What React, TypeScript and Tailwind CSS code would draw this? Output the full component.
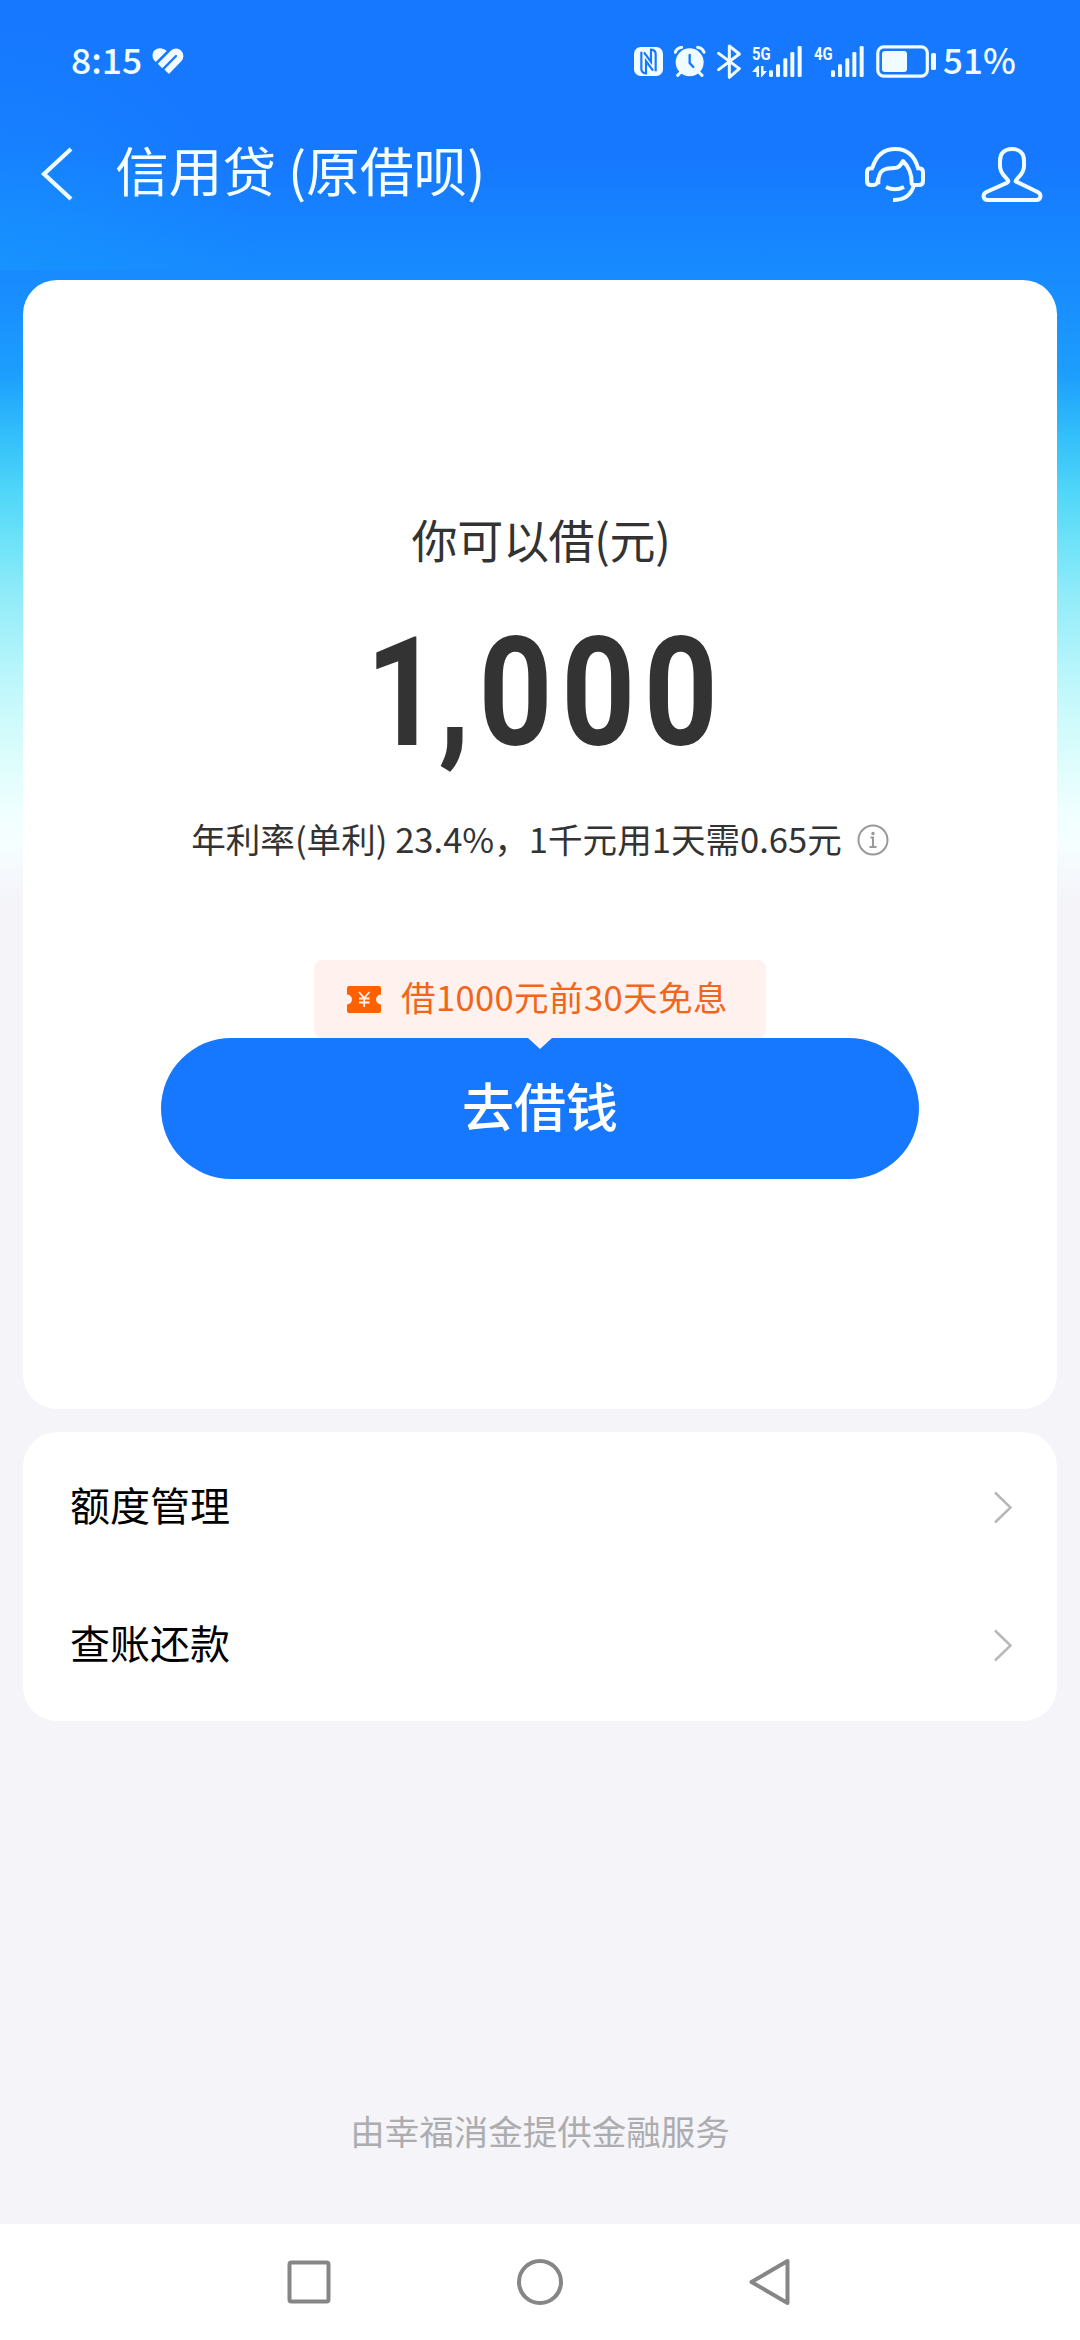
import type { ReactNode } from "react";

const menuItems = ["额度管理", "查账还款"];

function SignalBars() {
  return (
    <svg className="h-[31px] w-[33px]" viewBox="449 46 99 93" fill="#f0fcff">
      <rect x="449" y="119" width="12" height="20" rx="4" />
      <rect x="470" y="101" width="12" height="38" rx="4" />
      <rect x="492" y="83" width="12" height="56" rx="4" />
      <rect x="513" y="64" width="12" height="75" rx="4" />
      <rect x="535" y="46" width="12" height="93" rx="4" />
    </svg>
  );
}

function NetworkLabel({ children, active }: { children: ReactNode; active?: boolean }) {
  return (
    <div className="flex h-[31px] w-[17px] flex-col justify-between">
      <span className="w-[21px] origin-left scale-x-[0.78] font-['Roboto'] text-[19px] leading-[15px] font-bold">
        {children}
      </span>
      {active && (
        <svg className="h-[11px] w-[15px]" viewBox="0 0 15 11" fill="#f0fcff">
          <path d="M0 6 5.500 0H7v11H4.500V6zM9 0h2.500v5H15L9.800 11H9z" />
        </svg>
      )}
    </div>
  );
}

function StatusBar() {
  return (
    <div className="flex h-[122px] items-center pl-[71px] text-[#f0fcff]">
      <span className="w-[81px] pb-[4px] font-['Noto_Sans_CJK_SC'] text-[35.500px] leading-[44px] font-medium">8:15</span>
      <svg className="h-[27px] w-[32px]" viewBox="306 52 96 81" fill="none">
        <path d="M317 94c-16-14-11-40 12-41 9 0 15 3 21 8z" fill="#f0fcff" />
        <path d="m330 106 39-39a12.500 12.500 0 0 1 18 18l-37 38" stroke="#f0fcff" strokeWidth="19" />
      </svg>

      <div className="ml-[450px] flex items-center">
        {/* NFC */}
        <svg className="h-[29px] w-[29px]" viewBox="39 50 87 87">
          <rect x="39" y="50" width="87" height="87" rx="20" fill="#f0fcff" />
          <path
            d="M61 64v52q0 12 14 13V92l21 29M104 123V71q0-12-14-13v37L69 66"
            fill="none"
            stroke="#1677ff"
            strokeWidth="6.500"
          />
        </svg>
        {/* Alarm */}
        <svg className="ml-[11px] h-[31px] w-[32px]" viewBox="160 46 96 93" fill="none" strokeLinecap="round">
          <circle cx="207" cy="95" r="42" fill="#f0fcff" />
          <path d="M164 65q4-13 19-15M250 65q-4-13-19-15M181 124l-10 10M234 124l10 10" stroke="#f0fcff" strokeWidth="9" />
          <path d="M207 73v24l11 12" stroke="#1677ff" strokeWidth="7" />
        </svg>
        {/* Bluetooth */}
        <svg className="ml-[11px] h-[35px] w-[25px]" viewBox="289 42 75 105" fill="none">
          <path d="m294 70 62 46-30 26V48l30 24-62 47" stroke="#f0fcff" strokeWidth="9" strokeLinejoin="round" strokeLinecap="round" />
        </svg>
        <div className="ml-[10px] flex">
          <NetworkLabel active>5G</NetworkLabel>
          <SignalBars />
        </div>
        <div className="ml-[12px] flex">
          <NetworkLabel>4G</NetworkLabel>
          <SignalBars />
        </div>
        <svg className="ml-[12px] h-[33px] w-[61px]" viewBox="0 0 61 33" fill="none">
          <rect x="1.800" y="1.800" width="49.500" height="29.400" rx="6" stroke="#f0fcff" strokeWidth="3.200" />
          <rect x="6" y="6" width="25" height="21" rx="3" fill="#f0fcff" />
          <rect x="55" y="8" width="5" height="17" rx="1.500" fill="#f0fcff" />
        </svg>
        <span className="ml-[6px] pb-[4px] font-['Noto_Sans_CJK_SC'] text-[35px] leading-[44px] font-medium whitespace-nowrap">51%</span>
      </div>
    </div>
  );
}

function TitleBar() {
  return (
    <header className="flex h-[104px] items-center pl-[40px]">
      <svg className="h-[54px] w-[33px]" viewBox="0 0 33 54" fill="none">
        <path d="M31 2 4 27l27 25" stroke="#f0fcff" strokeWidth="4.200" />
      </svg>
      <h1 className="ml-[42px] pb-[10px] text-[53.7px] leading-[70px] font-normal text-[#f5ffff]">信用贷 (原借呗)</h1>
      <div className="mr-[37px] ml-auto flex gap-[56px]">
        {/* Customer service */}
        <svg className="h-[56px] w-[60px]" viewBox="72 78 180 168" fill="none" stroke="#f0fcff" strokeWidth="12" strokeLinejoin="round">
          <path d="M94 144q17-57 69-57t68 57" />
          <path d="M112 173q-2 22-14 22h-8q-12 0-12-12v-26q0-12 12-12h8M226 145h8q12 0 12 12v26q0 12-12 12h-18l-4-4q1-42-26-68-8 16-18 20c-18 4-34-3-48 13q-9 12-8 37" />
          <path d="M135 201q27 14 54 0M219 195q-13 46-63 45" />
        </svg>
        {/* Profile */}
        <svg className="h-[56px] w-[62px]" viewBox="420 78 186 168" fill="none" stroke="#f0fcff" strokeWidth="12" strokeLinejoin="round">
          <path d="M502 184c-3-12-25-19-25-46v-16c0-23 14-35 36-35s36 12 36 35v16c0 27-22 34-25 46l66 32c13 7 10 24-4 24H440c-14 0-17-17-4-24l63-28z" />
        </svg>
      </div>
    </header>
  );
}

function LoanCard() {
  return (
    <section className="flex h-[1129px] flex-col items-center rounded-[34px] bg-white pt-[224px] text-[#333]">
      <p className="pl-[2px] text-[46px] leading-[68px] tracking-[-0.3px]">你可以借(元)</p>
      <div className="mt-[31px] flex h-[180px] items-center justify-center pl-[12px]">
        <span className="scale-x-[0.85] font-['Roboto'] text-[152px] leading-[180px] font-bold tracking-[10px]">
          <span className="tracking-[-2px]">1</span>,000
        </span>
      </div>
      <div className="mt-[31px] flex h-[52px] items-center gap-[15px]">
        <p className="pb-[4px] text-[34.6px] leading-[52px] whitespace-nowrap">年利率(单利) 23.4%，1千元用1天需0.65元</p>
        <svg className="h-[32px] w-[32px]" viewBox="0 0 32 32" fill="none">
          <circle cx="16" cy="16" r="14.500" stroke="#999" strokeWidth="2" />
          <circle cx="16" cy="9.500" r="1.700" fill="#999" />
          <path d="M13.500 13.500H16V23M12.500 23h7" stroke="#999" strokeWidth="2" />
        </svg>
      </div>
      <div className="mt-[94px] flex h-[78px] w-[452px] items-center rounded-[8px] bg-[#fff2ee] pl-[33px] text-[#f0661a]">
        <svg className="h-[27px] w-[34px]" viewBox="0 0 34 27">
          <path d="M2 0h30q2 0 2 2v6.500a5 5 0 0 0 0 10V25q0 2-2 2H2q-2 0-2-2v-6.500a5 5 0 0 0 0-10V2q0-2 2-2z" fill="#ff6000" />
          <path d="m12 6 5.200 6L22.500 6M17.200 12v9M12 12.500h10.500M12 16.500h10.500" fill="none" stroke="#fff2ee" strokeWidth="1.800" />
        </svg>
        <span className="ml-[20px] pb-[6px] text-[34.6px] leading-[52px] tracking-[0.35px] whitespace-nowrap">借1000元前30天免息</span>
      </div>
      <button className="relative h-[141px] w-[758px] rounded-full bg-[#1677ff] pb-[8px] text-[52px] leading-[78px] font-medium text-white">
        <svg className="absolute top-0 left-[367px] h-[11px] w-[24px]" viewBox="0 0 24 11">
          <path d="M0 0h24L12 11z" fill="#fff2ee" />
        </svg>
        去借钱
      </button>
    </section>
  );
}

function Menu() {
  return (
    <section className="mt-[23px] flex h-[289px] flex-col rounded-[34px] bg-white pt-[6px]">
      {menuItems.map((label) => (
        <div key={label} className="flex h-[138px] items-center justify-between pr-[44px] pl-[47px] text-[40px] leading-[60px] text-black">
          <span className="pb-[6px]">{label}</span>
          <svg className="h-[33px] w-[20px]" viewBox="0 0 20 33" fill="none">
            <path d="m2 1.500 15.500 15L2 31.500" stroke="#b8b8b8" strokeWidth="2.500" />
          </svg>
        </div>
      ))}
    </section>
  );
}

function NavigationBar() {
  return (
    <nav className="flex h-[116px] items-center justify-center gap-[184px] bg-white pb-[1px]">
      <svg className="h-[48px] w-[46px]" viewBox="0 0 46 48" fill="none" stroke="#868686" strokeWidth="4">
        <rect x="3.500" y="4.500" width="39" height="39" rx="2" />
      </svg>
      <svg className="h-[48px] w-[48px]" viewBox="0 0 48 48" fill="none" stroke="#868686" strokeWidth="4">
        <circle cx="24" cy="24" r="21" />
      </svg>
      <svg className="h-[48px] w-[46px]" viewBox="0 0 46 48" fill="none" stroke="#868686" strokeWidth="4" strokeLinejoin="round">
        <path d="M39.500 3v42L3.500 24z" />
      </svg>
    </nav>
  );
}

export default function App() {
  return (
    <div className="flex h-[2340px] w-[1080px] flex-col overflow-hidden bg-[#f4f4f9] bg-[radial-gradient(circle_at_0px_270px,rgba(24,155,255,0.5)_0px,rgba(24,155,255,0)_260px),linear-gradient(180deg,#1677ff_0px,#1677ff_150px,#1686ff_240px,#1990fe_310px,#1c9ffd_375px,#34c0fa_438px,#50d6f8_492px,#70e3f9_545px,#90ebf9_594px,#b5f5fb_666px,#ccfafb_715px,#defdfc_763px,#efffff_812px,#f6feff_846px,#f5f8fc_875px,#f4f4f9_905px)] bg-[length:100%_270px,100%_100%] bg-no-repeat font-['Noto_Sans_CJK_SC',sans-serif]">
      <StatusBar />
      <TitleBar />
      <main className="flex flex-1 flex-col px-[23px] pt-[54px]">
        <LoanCard />
        <Menu />
        <p className="mt-auto mb-[68px] text-center text-[34.5px] leading-[52px] text-[#adadb0]">由幸福消金提供金融服务</p>
      </main>
      <NavigationBar />
    </div>
  );
}
